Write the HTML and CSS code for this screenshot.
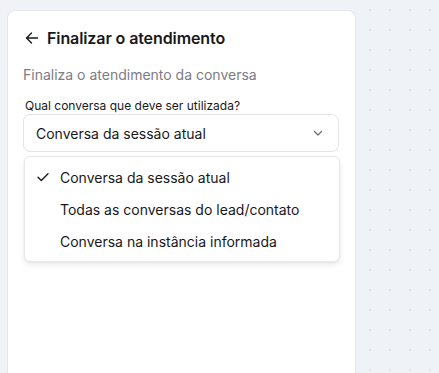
FILE: index.html
```html
<!DOCTYPE html>
<html lang="pt">
<head>
<meta charset="utf-8">
<link rel="stylesheet" href="styles.css">
</head>
<body>
<div class="app">
  <aside class="panel">
    <div class="header">
      <svg class="back" width="14" height="14" viewBox="0 0 14 14" fill="none" stroke="#18181b" stroke-width="1.4" stroke-linecap="round" stroke-linejoin="round"><path d="M12.5 7H1.5M6.5 2L1.5 7l5 5"/></svg>
      <h1 class="title">Finalizar o atendimento</h1>
    </div>
    <p class="desc">Finaliza o atendimento da conversa</p>
    <label class="label">Qual conversa que deve ser utilizada?</label>
    <div class="field">
      <div class="select">
        <span>Conversa da sessão atual</span>
        <svg class="chev" width="12" height="12" viewBox="0 0 12 12" fill="none" stroke="#71717a" stroke-width="1.3" stroke-linecap="round" stroke-linejoin="round"><path d="M2.5 4.5L6 8l3.5-3.5"/></svg>
      </div>
      <ul class="menu">
        <li class="item"><svg class="check" width="14" height="14" viewBox="0 0 14 14" fill="none" stroke="#18181b" stroke-width="1.4" stroke-linecap="round" stroke-linejoin="round"><path d="M2 7.2l3.3 3.3L12 3.8"/></svg>Conversa da sessão atual</li>
        <li class="item">Todas as conversas do lead/contato</li>
        <li class="item">Conversa na instância informada</li>
      </ul>
    </div>
  </aside>
  <main class="canvas"></main>
</div>
</body>
</html>
```

FILE: styles.css
```css
* { box-sizing: border-box; }
html, body { margin: 0; padding: 0; }
body {
  width: 439px;
  height: 373px;
  overflow: hidden;
  background: #eff2f7;
  font-family: Inter, "Noto Sans", sans-serif;
  color: #18181b;
}
.app {
  display: flex;
  height: 373px;
  overflow: hidden;
  padding: 10px 0 0 7px;
}
.panel {
  width: 349px;
  flex: none;
  background: #fff;
  border: 1px solid #e3e6ec;
  border-bottom: none;
  border-radius: 8px 8px 0 0;
  padding: 14px 16px 0 15px;
}
.header {
  display: flex;
  align-items: center;
  height: 26px;
  padding-left: 2px;
}
.back { flex: none; margin-right: 8px; }
.title {
  margin: 0;
  font-size: 16px;
  font-weight: 600;
  line-height: 26px;
  letter-spacing: -0.1px;
}
.desc {
  margin: 14px 0 0;
  font-size: 14px;
  line-height: 20px;
  color: #7c7c84;
}
.label {
  display: block;
  margin: 13px 0 0 2px;
  font-size: 12px;
  line-height: 16px;
  color: #18181b;
}
.field { position: relative; }
.select {
  display: flex;
  align-items: center;
  justify-content: space-between;
  height: 38px;
  border: 1px solid #e4e4e7;
  border-radius: 7px;
  padding: 0 14px 0 12px;
  font-size: 14px;
}
.chev { flex: none; }
.menu {
  position: absolute;
  top: 42px;
  left: 1px;
  width: 316px;
  margin: 0;
  padding: 4px 0;
  list-style: none;
  background: #fff;
  border: 1px solid #e8e8ec;
  border-radius: 6px;
  box-shadow: 0 3px 6px rgba(0,0,0,0.08), 0 1px 2px rgba(0,0,0,0.05);
}
.item {
  position: relative;
  height: 32px;
  display: flex;
  align-items: center;
  padding-left: 35px;
  font-size: 14px;
  color: #18181b;
}
.check { position: absolute; left: 11px; top: 9px; }
.canvas {
  flex: 1;
  height: 373px;
  margin-top: -10px;
  background-image: radial-gradient(circle, #dfe3ea 1px, transparent 1.2px);
  background-size: 20px 20px;
  background-position: 4px 0px;
}
```
